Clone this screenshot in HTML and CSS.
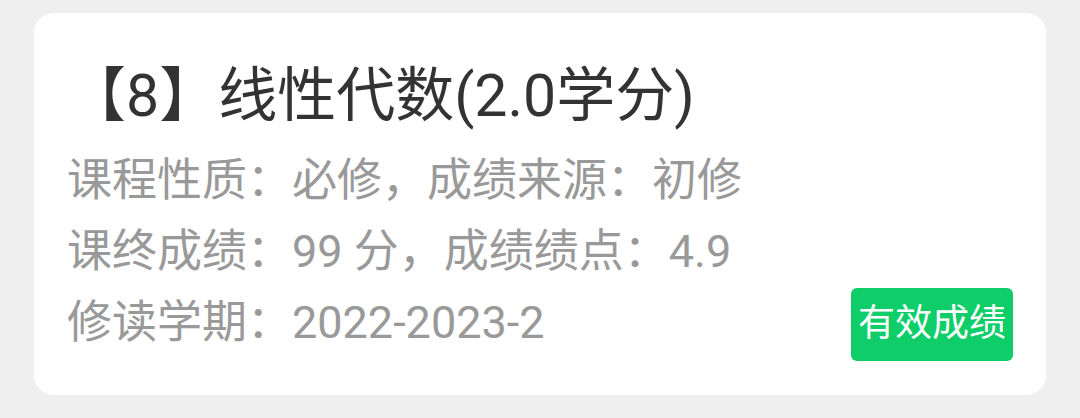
FILE: index.html
```html
<!DOCTYPE html>
<html lang="zh-CN">
<head>
	<meta charset="UTF-8">
	<meta name="viewport" content="width=device-width, initial-scale=1">
	<title>成绩查询</title>
	<link rel="stylesheet" href="styles.css">
</head>
<body>
	<ul class="score-list">
		<li class="score-item">
			<h2 class="title">【8】线性代数(2.0学分)</h2>
			<div class="detail">
				<div class="info">
					<p>课程性质：必修，成绩来源：初修</p>
					<p>课终成绩：99 分，成绩绩点：4.9</p>
					<p>修读学期：2022-2023-2</p>
				</div>
				<span class="tag">有效成绩</span>
			</div>
		</li>
	</ul>
</body>
</html>
```
FILE: styles.css
```css
body {
	margin: 0;
	background: #efefef;
	font-family: Roboto, "Noto Sans CJK SC", sans-serif;
}

ul,
li,
h2,
p {
	margin: 0;
	padding: 0;
	list-style: none;
}

.score-list {
	padding: 13px 34px;
}

.score-item {
	padding: 40px 33px 34px;
	background: #fff;
	border-radius: 20px;
}

.title {
	color: #333;
	font-size: 59px;
	font-weight: 400;
	line-height: 86px;
}

.detail {
	display: flex;
	justify-content: space-between;
	align-items: flex-end;
	padding-top: 6px;
}

.info {
	padding-bottom: 3px;
	color: #999;
	font-size: 45px;
	line-height: 71px;
}

.tag {
	padding: 0 7px 2px;
	color: #fff;
	font-size: 37px;
	line-height: 71px;
	background: #0fce69;
	border-radius: 6px;
}
```
